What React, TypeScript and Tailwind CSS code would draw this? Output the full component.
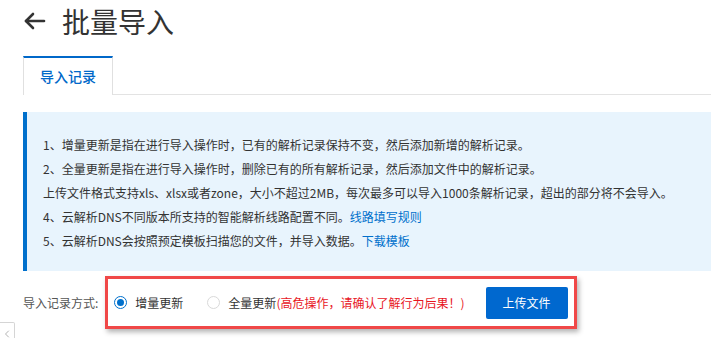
import { ChevronLeft } from "lucide-react";

const notes = [
  { text: "1、增量更新是指在进行导入操作时，已有的解析记录保持不变，然后添加新增的解析记录。" },
  { text: "2、全量更新是指在进行导入操作时，删除已有的所有解析记录，然后添加文件中的解析记录。" },
  {
    text: "上传文件格式支持xls、xlsx或者zone，大小不超过2MB，每次最多可以导入1000条解析记录，超出的部分将不会导入。",
  },
  { text: "4、云解析DNS不同版本所支持的智能解析线路配置不同。", link: "线路填写规则" },
  { text: "5、云解析DNS会按照预定模板扫描您的文件，并导入数据。", link: "下载模板" },
];

function Radio({ checked }: { checked?: boolean }) {
  return (
    <span
      className={
        checked
          ? "flex h-[13px] w-[13px] items-center justify-center rounded-full border border-[#0070cc] bg-white"
          : "flex h-[13px] w-[13px] items-center justify-center rounded-full border border-[#d9d9d9] bg-white"
      }
    >
      {checked && <span className="h-[7px] w-[7px] rounded-full bg-[#0070cc]" />}
    </span>
  );
}

export default function App() {
  return (
    <div className="relative h-[338px] w-[711px] overflow-hidden bg-white font-['Noto_Sans_CJK_SC',sans-serif] text-[#333]">
      <div className="flex h-[42px] items-center gap-[15px] pl-[23px]">
        <svg
          width="24"
          height="24"
          viewBox="0 0 24 24"
          fill="none"
          stroke="#333"
          strokeWidth="2.6"
          strokeLinecap="round"
          strokeLinejoin="round"
        >
          <path d="M21 12H3" />
          <path d="M10 5l-7 7 7 7" />
        </svg>
        <h1 className="text-[28px] leading-none text-[#333]">批量导入</h1>
      </div>

      <div className="mt-[14px] flex h-[39px] pl-[23px]">
        <div className="flex items-center border-x border-t-2 border-x-[#e0e0e0] border-t-[#0068c9] bg-white px-[16px] text-[14px] font-medium text-[#0068c9]">
          导入记录
        </div>
        <div className="flex-1 border-b border-[#e3e3e3]" />
      </div>

      <div className="ml-[23px] mt-[17px] border-l-4 border-[#0070cc] bg-[#e8f4fd] pb-[18px] pl-[16px] pt-[21px] text-[12px] leading-[24px] text-[#333]">
        {notes.map((n) => (
          <div key={n.text} className="whitespace-nowrap">
            {n.text}
            {n.link && <span className="cursor-pointer text-[#0070cc]">{n.link}</span>}
          </div>
        ))}
      </div>

      <div className="ml-[23px] mt-[5px] flex items-center text-[12px]">
        <span className="text-[#555]">导入记录方式:</span>
        <div className="ml-[7px] flex h-[53px] w-[472px] items-center border-[3px] border-[#f04848] pl-[6px] shadow-[2px_3px_5px_rgba(0,0,0,0.3)]">
          <label className="flex items-center gap-[8px]">
            <Radio checked />
            <span className="text-[#333]">增量更新</span>
          </label>
          <label className="ml-[24px] flex items-center gap-[8px]">
            <Radio />
            <span className="text-[#333]">
              全量更新<span className="text-[#e8161e]">(高危操作，请确认了解行为后果！)</span>
            </span>
          </label>
          <button className="ml-[21px] h-[32px] rounded-[2px] bg-[#0068cf] px-[17px] text-[12px] text-white">
            上传文件
          </button>
        </div>
      </div>

      <div className="absolute left-0 top-[322px] flex h-[24px] w-[15px] items-center justify-center rounded-tr-[2px] border border-l-0 border-[#d5d5d5] bg-white">
        <ChevronLeft size={12} strokeWidth={1.5} className="text-[#999]" />
      </div>
    </div>
  );
}
